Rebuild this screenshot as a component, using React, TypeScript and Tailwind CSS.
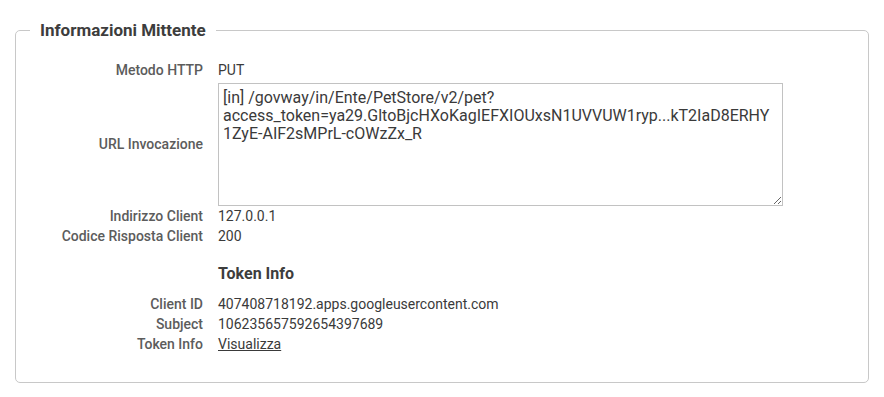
const Row = ({ label, children }: { label: string; children: React.ReactNode }) => (
    <div className="grid grid-cols-[187px_1fr] gap-x-[15px] items-center h-5">
        <div className="text-right font-medium text-[#5c5c5c]">{label}</div>
        <div className="text-[#3a3a3a]">{children}</div>
    </div>
)

const App = () => {
    return (
        <div className="bg-white w-[884px] h-[397px] pt-5 px-[15px] font-['Roboto',sans-serif] text-[14px]">
            <fieldset className="border border-[#c8c8c8] rounded-[5px] h-[363px] px-0 pb-7">
                <legend className="ml-[14px] px-[10px] h-5 leading-5 text-[17px] font-bold text-[#3d3d3d]">Informazioni Mittente</legend>

                <div className="mt-5">
                    <Row label="Metodo HTTP">PUT</Row>

                    {/* URL */}
                    <div className="grid grid-cols-[187px_1fr] gap-x-[15px] items-center mt-[3px]">
                        <div className="text-right font-medium text-[#5c5c5c]">URL Invocazione</div>
                        <textarea
                            readOnly
                            className="w-[565px] h-[123px] border border-[#c2c2c2] px-[4px] pt-[5px] text-[16px] leading-[18px] text-[#3a3a3a] resize-y outline-none"
                            defaultValue={"[in] /govway/in/Ente/PetStore/v2/pet?access_token=ya29.GltoBjcHXoKagIEFXIOUxsN1UVVUW1ryp...kT2IaD8ERHY1ZyE-AIF2sMPrL-cOWzZx_R"}
                        />
                    </div>

                    <Row label="Indirizzo Client">127.0.0.1</Row>
                    <Row label="Codice Risposta Client">200</Row>

                    <div className="grid grid-cols-[187px_1fr] gap-x-[15px] h-5 items-center mt-4">
                        <div />
                        <div className="text-[16px] font-bold text-[#3d3d3d]">Token Info</div>
                    </div>

                    <div className="mt-3">
                        <Row label="Client ID">407408718192.apps.googleusercontent.com</Row>
                        <Row label="Subject">106235657592654397689</Row>
                        <Row label="Token Info"><a href="#" className="underline">Visualizza</a></Row>
                    </div>
                </div>
            </fieldset>
        </div>
    )
}

export default App
